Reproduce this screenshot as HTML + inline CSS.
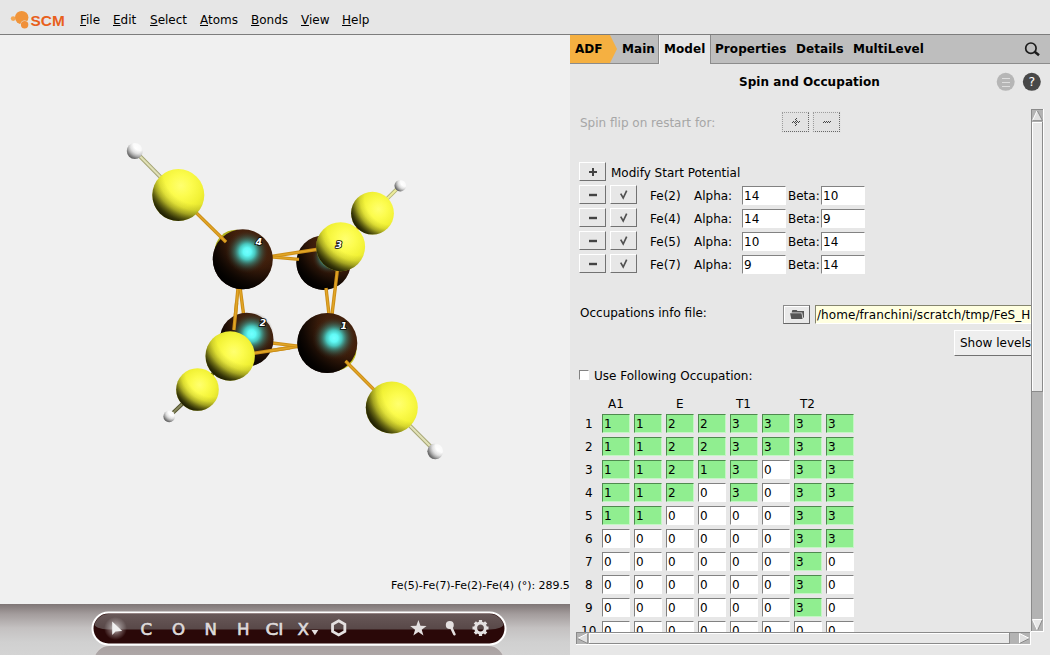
<!DOCTYPE html>
<html>
<head>
<meta charset="utf-8">
<title>ADF Spin and Occupation</title>
<style>
*{box-sizing:border-box;margin:0;padding:0}
html,body{width:1050px;height:655px;overflow:hidden;background:#f0f0f0}
body{font-family:"DejaVu Sans","Liberation Sans",sans-serif;font-size:12px;color:#000;position:relative}
.abs{position:absolute}
#menubar{left:0;top:0;width:1050px;height:34px;background:#e6e6e6}
#menuline{left:0;top:34px;width:1050px;height:1px;background:#7d7d7d}
.mi{position:absolute;top:12px;font-size:12px;line-height:16px;white-space:nowrap}
.mi u{text-decoration:underline;text-underline-offset:1px}
#left{left:0;top:35px;width:570px;height:569px;background:#f0f0f0}
#right{left:570px;top:35px;width:480px;height:620px;background:#e7e7e7}
#tabbar{left:570px;top:35px;width:480px;height:28px;background:#bebebe}
#tabline{left:570px;top:63px;width:480px;height:1px;background:#8c8c8c}
.tab{position:absolute;letter-spacing:0.06px;top:41px;font-weight:bold;font-size:12px;line-height:16px;white-space:nowrap}
#bottom{left:0;top:604px;width:570px;height:51px;background:linear-gradient(#7f7676 0px,#a39c9c 10px,#c4c1c1 24px,#d0d0d0 38px,#d4d4d4 51px)}
.lbl{position:absolute;margin-top:1px;font-size:12px;line-height:16px;white-space:nowrap}
.btn{position:absolute;background:#e7e7e7;border:1px solid;border-color:#fff #727272 #727272 #fff;font-size:12px;line-height:16px;text-align:center}
.inp{position:absolute;background:#fff;border:1px solid;border-color:#828282 #fff #fff #828282;font-size:12px;line-height:16px;padding-left:1px;padding-top:1px;white-space:nowrap;overflow:hidden}
.cell{position:absolute;width:28px;height:19px;background:#fff;border:1px solid;border-color:#828282 #fff #fff #828282;font-size:12px;line-height:15px;padding:2px 0 0 1px}
.g{background:#90ee90;border-color:#4f8a4f #c4f6c4 #c4f6c4 #4f8a4f}
.dot{border:1px dotted;border-color:#9c9c9c #666 #666 #9c9c9c;background:#e2e2e2;box-shadow:0 0 0 1px #e4e4e4}
</style>
</head>
<body>
<div id="menubar" class="abs"></div>
<div id="menuline" class="abs"></div>
<svg class="abs" style="left:0px;top:0px" width="70" height="34" viewBox="0 0 70 34">
<circle cx="13.2" cy="18.6" r="2.4" fill="#f4a650"/>
<circle cx="21.7" cy="17.6" r="6.7" fill="#f0943a"/>
<circle cx="24.6" cy="24.8" r="4.3" fill="#e6e6e6"/>
<circle cx="24.6" cy="24.8" r="3.7" fill="#f0903a"/>
<text x="30.6" y="25.7" font-family="Liberation Sans, sans-serif" font-weight="bold" font-size="15.2" fill="#e8601c" textLength="34.2" lengthAdjust="spacingAndGlyphs">SCM</text>
</svg>
<div class="mi" style="left:80px"><u>F</u>ile</div>
<div class="mi" style="left:113px"><u>E</u>dit</div>
<div class="mi" style="left:150px"><u>S</u>elect</div>
<div class="mi" style="left:200px"><u>A</u>toms</div>
<div class="mi" style="left:251px"><u>B</u>onds</div>
<div class="mi" style="left:301px"><u>V</u>iew</div>
<div class="mi" style="left:342px"><u>H</u>elp</div>

<div id="left" class="abs"></div>
<div id="right" class="abs"></div>
<div id="tabbar" class="abs"></div>
<div id="tabline" class="abs"></div>
<svg class="abs" style="left:570px;top:35px" width="480" height="30" viewBox="0 0 480 30">
<polygon points="0,0 40,0 47,14 40,28 0,28" fill="#f5b041"/>
<rect x="88" y="0" width="1" height="28" fill="#8c8c8c"/>
<rect x="89" y="0" width="51" height="30" fill="#e7e7e7"/>
<rect x="89" y="0" width="1" height="29" fill="#f6f6f6"/>
<rect x="140" y="0" width="1" height="28" fill="#8c8c8c"/>
<g fill="none" stroke="#1c1c1c"><circle cx="460.9" cy="13.2" r="5.2" stroke-width="1.7"/><path d="M464.7 16.8 L469 20.3" stroke-width="2.5"/></g>
</svg>
<div class="tab" style="left:575px">ADF</div>
<div class="tab" style="left:622px">Main</div>
<div class="tab" style="left:664px">Model</div>
<div class="tab" style="left:715px">Properties</div>
<div class="tab" style="left:796px">Details</div>
<div class="tab" style="left:853px">MultiLevel</div>

<div class="lbl" style="left:739px;top:73px;font-weight:bold;letter-spacing:0.06px">Spin and Occupation</div>
<svg class="abs" style="left:994px;top:70px" width="50" height="24" viewBox="0 0 50 24">
<circle cx="11.700" cy="11.800" r="9" fill="#b6b6b6"/>
<g stroke="#dedede" stroke-width="1"><path d="M8 8.500h8M8 12.500h8M8 16.500h8"/></g>
<circle cx="37.800" cy="11.800" r="9" fill="#484848"/>
<text x="37.7" y="16.3" text-anchor="middle" font-family="DejaVu Sans, sans-serif" font-size="12.5" fill="#fff">?</text>
</svg>
<div class="lbl" style="left:580px;top:114px;color:#a6a6a6">Spin flip on restart for:</div>
<div class="abs dot" style="left:782px;top:112px;width:27px;height:20px"><svg width="25" height="18" viewBox="0 0 25 18" style="display:block" shape-rendering="crispEdges"><defs><pattern id="stip" width="2" height="2" patternUnits="userSpaceOnUse"><rect x="0" y="0" width="1" height="1" fill="#444"/><rect x="1" y="1" width="1" height="1" fill="#444"/></pattern></defs><rect x="9" y="8" width="8" height="2" fill="url(#stip)"/><rect x="12" y="5" width="2" height="8" fill="url(#stip)"/></svg></div>
<div class="abs dot" style="left:813px;top:112px;width:27px;height:20px"><svg width="25" height="18" viewBox="0 0 25 18" style="display:block" shape-rendering="crispEdges"><rect x="9" y="8" width="8" height="2" fill="url(#stip)"/></svg></div>
<div class="btn" style="left:579px;top:162px;width:27px;height:19px"><svg width="25" height="17" viewBox="0 0 25 17" style="display:block"><path d="M9 9h8M13 5v8" stroke="#444" stroke-width="2" fill="none"/></svg></div>
<div class="lbl" style="left:611px;top:164px">Modify Start Potential</div>
<div class="btn" style="left:579px;top:185px;width:27px;height:19px"><svg width="25" height="17" viewBox="0 0 25 17" style="display:block"><path d="M9 9h8" stroke="#444" stroke-width="2.4" fill="none"/></svg></div>
<div class="btn" style="left:610px;top:185px;width:27px;height:19px"><svg width="25" height="17" viewBox="0 0 25 17" style="display:block"><path d="M9.7 7.6L12.2 12L15.7 4.7" stroke="#505050" stroke-width="1.7" fill="none" stroke-linejoin="miter"/></svg></div>
<div class="lbl" style="left:650px;top:187px">Fe(2)</div>
<div class="lbl" style="left:694px;top:187px">Alpha:</div>
<div class="inp" style="left:742px;top:186px;width:44px;height:19px">14</div>
<div class="lbl" style="left:788px;top:187px">Beta:</div>
<div class="inp" style="left:821px;top:186px;width:44px;height:19px">10</div>
<div class="btn" style="left:579px;top:208px;width:27px;height:19px"><svg width="25" height="17" viewBox="0 0 25 17" style="display:block"><path d="M9 9h8" stroke="#444" stroke-width="2.4" fill="none"/></svg></div>
<div class="btn" style="left:610px;top:208px;width:27px;height:19px"><svg width="25" height="17" viewBox="0 0 25 17" style="display:block"><path d="M9.7 7.6L12.2 12L15.7 4.7" stroke="#505050" stroke-width="1.7" fill="none" stroke-linejoin="miter"/></svg></div>
<div class="lbl" style="left:650px;top:210px">Fe(4)</div>
<div class="lbl" style="left:694px;top:210px">Alpha:</div>
<div class="inp" style="left:742px;top:209px;width:44px;height:19px">14</div>
<div class="lbl" style="left:788px;top:210px">Beta:</div>
<div class="inp" style="left:821px;top:209px;width:44px;height:19px">9</div>
<div class="btn" style="left:579px;top:231px;width:27px;height:19px"><svg width="25" height="17" viewBox="0 0 25 17" style="display:block"><path d="M9 9h8" stroke="#444" stroke-width="2.4" fill="none"/></svg></div>
<div class="btn" style="left:610px;top:231px;width:27px;height:19px"><svg width="25" height="17" viewBox="0 0 25 17" style="display:block"><path d="M9.7 7.6L12.2 12L15.7 4.7" stroke="#505050" stroke-width="1.7" fill="none" stroke-linejoin="miter"/></svg></div>
<div class="lbl" style="left:650px;top:233px">Fe(5)</div>
<div class="lbl" style="left:694px;top:233px">Alpha:</div>
<div class="inp" style="left:742px;top:232px;width:44px;height:19px">10</div>
<div class="lbl" style="left:788px;top:233px">Beta:</div>
<div class="inp" style="left:821px;top:232px;width:44px;height:19px">14</div>
<div class="btn" style="left:579px;top:254px;width:27px;height:19px"><svg width="25" height="17" viewBox="0 0 25 17" style="display:block"><path d="M9 9h8" stroke="#444" stroke-width="2.4" fill="none"/></svg></div>
<div class="btn" style="left:610px;top:254px;width:27px;height:19px"><svg width="25" height="17" viewBox="0 0 25 17" style="display:block"><path d="M9.7 7.6L12.2 12L15.7 4.7" stroke="#505050" stroke-width="1.7" fill="none" stroke-linejoin="miter"/></svg></div>
<div class="lbl" style="left:650px;top:256px">Fe(7)</div>
<div class="lbl" style="left:694px;top:256px">Alpha:</div>
<div class="inp" style="left:742px;top:255px;width:44px;height:19px">9</div>
<div class="lbl" style="left:788px;top:256px">Beta:</div>
<div class="inp" style="left:821px;top:255px;width:44px;height:19px">14</div>
<div class="lbl" style="left:580px;top:304px">Occupations info file:</div>
<div class="abs" style="left:783px;top:305px;width:27px;height:19px;background:#e9e9e9;border:1px solid;border-color:#8c8c8c #666 #666 #8c8c8c;box-shadow:inset 1px 1px 0 #fff"><svg width="25" height="17" viewBox="0 0 25 17" style="display:block"><path d="M8.4 4.1h4.2l0.9 1h6.5v6.4l-0.9 0.3-0.9-5.2h-10.6z" fill="#555"/><path d="M6.1 7.2h11.4l1.1 5.7h-11.3z" fill="#555"/></svg></div>
<div class="inp" style="left:815px;top:305px;width:216px;height:19px;background:#ffffe0;border-right:none;padding-left:1px;border-color:#85856f #fff #fff #85856f;letter-spacing:0.07px">/home/franchini/scratch/tmp/FeS_H</div>
<div class="btn" style="left:954px;top:330px;width:77px;height:26px;background:#eeeeee;border-right:none;text-align:left;padding-left:5px;padding-top:1px;line-height:22px;overflow:hidden;white-space:nowrap">Show levels</div>
<div class="abs" style="left:579px;top:370px;width:10px;height:10px;background:#fff;border:1px solid;border-color:#828282 #fff #fff #828282"></div>
<div class="lbl" style="left:594px;top:367px">Use Following Occupation:</div>
<div class="lbl" style="left:608px;top:395px">A1</div>
<div class="lbl" style="left:676px;top:395px">E</div>
<div class="lbl" style="left:736px;top:395px">T1</div>
<div class="lbl" style="left:800px;top:395px">T2</div>
<div class="abs" style="left:577px;top:410px;width:454px;height:222px;overflow:hidden">
<div class="lbl" style="left:8px;top:5px">1</div>
<div class="cell g" style="left:25px;top:4px">1</div>
<div class="cell g" style="left:57px;top:4px">1</div>
<div class="cell g" style="left:89px;top:4px">2</div>
<div class="cell g" style="left:121px;top:4px">2</div>
<div class="cell g" style="left:153px;top:4px">3</div>
<div class="cell g" style="left:185px;top:4px">3</div>
<div class="cell g" style="left:217px;top:4px">3</div>
<div class="cell g" style="left:249px;top:4px">3</div>
<div class="lbl" style="left:8px;top:28px">2</div>
<div class="cell g" style="left:25px;top:27px">1</div>
<div class="cell g" style="left:57px;top:27px">1</div>
<div class="cell g" style="left:89px;top:27px">2</div>
<div class="cell g" style="left:121px;top:27px">2</div>
<div class="cell g" style="left:153px;top:27px">3</div>
<div class="cell g" style="left:185px;top:27px">3</div>
<div class="cell g" style="left:217px;top:27px">3</div>
<div class="cell g" style="left:249px;top:27px">3</div>
<div class="lbl" style="left:8px;top:51px">3</div>
<div class="cell g" style="left:25px;top:50px">1</div>
<div class="cell g" style="left:57px;top:50px">1</div>
<div class="cell g" style="left:89px;top:50px">2</div>
<div class="cell g" style="left:121px;top:50px">1</div>
<div class="cell g" style="left:153px;top:50px">3</div>
<div class="cell" style="left:185px;top:50px">0</div>
<div class="cell g" style="left:217px;top:50px">3</div>
<div class="cell g" style="left:249px;top:50px">3</div>
<div class="lbl" style="left:8px;top:74px">4</div>
<div class="cell g" style="left:25px;top:73px">1</div>
<div class="cell g" style="left:57px;top:73px">1</div>
<div class="cell g" style="left:89px;top:73px">2</div>
<div class="cell" style="left:121px;top:73px">0</div>
<div class="cell g" style="left:153px;top:73px">3</div>
<div class="cell" style="left:185px;top:73px">0</div>
<div class="cell g" style="left:217px;top:73px">3</div>
<div class="cell g" style="left:249px;top:73px">3</div>
<div class="lbl" style="left:8px;top:97px">5</div>
<div class="cell g" style="left:25px;top:96px">1</div>
<div class="cell g" style="left:57px;top:96px">1</div>
<div class="cell" style="left:89px;top:96px">0</div>
<div class="cell" style="left:121px;top:96px">0</div>
<div class="cell" style="left:153px;top:96px">0</div>
<div class="cell" style="left:185px;top:96px">0</div>
<div class="cell g" style="left:217px;top:96px">3</div>
<div class="cell g" style="left:249px;top:96px">3</div>
<div class="lbl" style="left:8px;top:120px">6</div>
<div class="cell" style="left:25px;top:119px">0</div>
<div class="cell" style="left:57px;top:119px">0</div>
<div class="cell" style="left:89px;top:119px">0</div>
<div class="cell" style="left:121px;top:119px">0</div>
<div class="cell" style="left:153px;top:119px">0</div>
<div class="cell" style="left:185px;top:119px">0</div>
<div class="cell g" style="left:217px;top:119px">3</div>
<div class="cell g" style="left:249px;top:119px">3</div>
<div class="lbl" style="left:8px;top:143px">7</div>
<div class="cell" style="left:25px;top:142px">0</div>
<div class="cell" style="left:57px;top:142px">0</div>
<div class="cell" style="left:89px;top:142px">0</div>
<div class="cell" style="left:121px;top:142px">0</div>
<div class="cell" style="left:153px;top:142px">0</div>
<div class="cell" style="left:185px;top:142px">0</div>
<div class="cell g" style="left:217px;top:142px">3</div>
<div class="cell" style="left:249px;top:142px">0</div>
<div class="lbl" style="left:8px;top:166px">8</div>
<div class="cell" style="left:25px;top:165px">0</div>
<div class="cell" style="left:57px;top:165px">0</div>
<div class="cell" style="left:89px;top:165px">0</div>
<div class="cell" style="left:121px;top:165px">0</div>
<div class="cell" style="left:153px;top:165px">0</div>
<div class="cell" style="left:185px;top:165px">0</div>
<div class="cell g" style="left:217px;top:165px">3</div>
<div class="cell" style="left:249px;top:165px">0</div>
<div class="lbl" style="left:8px;top:189px">9</div>
<div class="cell" style="left:25px;top:188px">0</div>
<div class="cell" style="left:57px;top:188px">0</div>
<div class="cell" style="left:89px;top:188px">0</div>
<div class="cell" style="left:121px;top:188px">0</div>
<div class="cell" style="left:153px;top:188px">0</div>
<div class="cell" style="left:185px;top:188px">0</div>
<div class="cell g" style="left:217px;top:188px">3</div>
<div class="cell" style="left:249px;top:188px">0</div>
<div class="lbl" style="left:4px;top:212px">10</div>
<div class="cell" style="left:25px;top:211px">0</div>
<div class="cell" style="left:57px;top:211px">0</div>
<div class="cell" style="left:89px;top:211px">0</div>
<div class="cell" style="left:121px;top:211px">0</div>
<div class="cell" style="left:153px;top:211px">0</div>
<div class="cell" style="left:185px;top:211px">0</div>
<div class="cell" style="left:217px;top:211px">0</div>
<div class="cell" style="left:249px;top:211px">0</div>
</div>
<svg class="abs" style="left:1031px;top:109px" width="13" height="523" viewBox="0 0 13 523">
<rect x="0" y="0" width="13" height="523" fill="#b3b3b3"/>
<rect x="0" y="0" width="1" height="523" fill="#8a8a8a"/><rect x="0" y="0" width="13" height="1" fill="#8a8a8a"/>
<rect x="12" y="0" width="1" height="523" fill="#fff"/><rect x="0" y="522" width="13" height="1" fill="#fff"/>
<polygon points="6.2,1.5 1.5,11.5 11.5,11.5" fill="#e0e0e0"/><path d="M6.2 1.5L1.5 11.5" stroke="#fff" stroke-width="1"/><path d="M1.5 11.7H11.5L6.2 1.5" stroke="#8a8a8a" stroke-width="1" fill="none"/>
<rect x="1" y="13" width="11" height="270" fill="#e7e7e7"/><rect x="1" y="13" width="1" height="270" fill="#fff"/><rect x="1" y="13" width="11" height="1" fill="#fff"/><rect x="11" y="13" width="1" height="270" fill="#8a8a8a"/><rect x="1" y="282" width="11" height="1" fill="#8a8a8a"/>
<polygon points="6.5,521.5 1.5,510.5 11.5,510.5" fill="#e7e7e7"/><path d="M11.5 510.5H1.5L6.5 521.5" stroke="#fff" stroke-width="1" fill="none"/><path d="M11.5 510.5L6.5 521.5" stroke="#8a8a8a" stroke-width="1"/>
</svg>
<svg class="abs" style="left:576px;top:632px" width="455" height="13" viewBox="0 0 455 13">
<rect x="0" y="0" width="455" height="13" fill="#b3b3b3"/>
<rect x="0" y="0" width="455" height="1" fill="#8a8a8a"/><rect x="0" y="0" width="1" height="13" fill="#8a8a8a"/>
<rect x="0" y="12" width="455" height="1" fill="#fff"/><rect x="454" y="0" width="1" height="13" fill="#fff"/>
<polygon points="1.500,6.500 11.500,1.500 11.500,11.500" fill="#e0e0e0"/><path d="M11.500 1.500L1.500 6.500" stroke="#fff" stroke-width="1"/><path d="M1.500 6.500L11.700 11.500V1.500" stroke="#8a8a8a" stroke-width="1" fill="none"/>
<rect x="13" y="1" width="421" height="11" fill="#e7e7e7"/><rect x="13" y="1" width="421" height="1" fill="#fff"/><rect x="13" y="1" width="1" height="11" fill="#fff"/><rect x="13" y="11" width="421" height="1" fill="#8a8a8a"/><rect x="433" y="1" width="1" height="11" fill="#8a8a8a"/>
<polygon points="453.500,6.500 443.500,1.500 443.500,11.500" fill="#e0e0e0"/><path d="M443.500 11.500V1.500L453.500 6.500" stroke="#fff" stroke-width="1" fill="none"/><path d="M453.500 6.500L443.500 11.500" stroke="#8a8a8a" stroke-width="1"/>
</svg>
<svg class="abs" style="left:0;top:35px" width="570" height="569" viewBox="0 35 570 569">
<defs>
<radialGradient id="gCy" cx="0.5" cy="0.5" r="0.5">
<stop offset="0" stop-color="#74ffff"/><stop offset="0.18" stop-color="#60faf6"/><stop offset="0.36" stop-color="#48d4cc" stop-opacity="0.92"/><stop offset="0.56" stop-color="#3a948a" stop-opacity="0.62"/><stop offset="0.78" stop-color="#34584c" stop-opacity="0.3"/><stop offset="1" stop-color="#3c1a0a" stop-opacity="0"/>
</radialGradient>
<radialGradient id="bHtr" cx="0.630" cy="0.390" r="0.670"><stop offset="0" stop-color="#ffffff"/><stop offset="0.5" stop-color="#fafafa"/><stop offset="0.8" stop-color="#e8e8e8"/><stop offset="1" stop-color="#d4d4d4"/></radialGradient>
<radialGradient id="sHtr" gradientUnits="userSpaceOnUse" cx="405.75" cy="181.37" r="13.05"><stop offset="0.4" stop-color="#202020" stop-opacity="0"/><stop offset="0.6" stop-color="#202020" stop-opacity="0.12"/><stop offset="0.75" stop-color="#202020" stop-opacity="0.32"/><stop offset="0.88" stop-color="#202020" stop-opacity="0.55"/><stop offset="1" stop-color="#202020" stop-opacity="0.7"/></radialGradient>
<radialGradient id="bFe3" cx="0.600" cy="0.390" r="0.649"><stop offset="0" stop-color="#4e2612"/><stop offset="0.6" stop-color="#42200c"/><stop offset="1" stop-color="#361808"/></radialGradient>
<radialGradient id="sFe3" gradientUnits="userSpaceOnUse" cx="343.18" cy="236.59" r="61.20"><stop offset="0.42" stop-color="#000" stop-opacity="0"/><stop offset="0.55" stop-color="#000" stop-opacity="0.15"/><stop offset="0.68" stop-color="#000" stop-opacity="0.45"/><stop offset="0.8" stop-color="#000" stop-opacity="0.75"/><stop offset="0.9" stop-color="#000" stop-opacity="0.93"/><stop offset="1" stop-color="#000" stop-opacity="1"/></radialGradient>
<radialGradient id="bStr" cx="0.640" cy="0.405" r="0.669"><stop offset="0" stop-color="#ffff70"/><stop offset="0.3" stop-color="#fcfc4e"/><stop offset="0.6" stop-color="#f2f236"/><stop offset="0.85" stop-color="#e0e02c"/><stop offset="1" stop-color="#cccc26"/></radialGradient>
<radialGradient id="sStr" gradientUnits="userSpaceOnUse" cx="392.60" cy="197.22" r="48.15"><stop offset="0.58" stop-color="#101000" stop-opacity="0"/><stop offset="0.68" stop-color="#101000" stop-opacity="0.1"/><stop offset="0.77" stop-color="#101000" stop-opacity="0.32"/><stop offset="0.84" stop-color="#101000" stop-opacity="0.6"/><stop offset="0.9" stop-color="#101000" stop-opacity="0.8"/><stop offset="0.95" stop-color="#101000" stop-opacity="0.9"/><stop offset="1" stop-color="#101000" stop-opacity="0.94"/></radialGradient>
<radialGradient id="bFe2" cx="0.593" cy="0.400" r="0.636"><stop offset="0" stop-color="#4e2612"/><stop offset="0.6" stop-color="#42200c"/><stop offset="1" stop-color="#361808"/></radialGradient>
<radialGradient id="sFe2" gradientUnits="userSpaceOnUse" cx="266.00" cy="313.77" r="60.30"><stop offset="0.42" stop-color="#000" stop-opacity="0"/><stop offset="0.55" stop-color="#000" stop-opacity="0.15"/><stop offset="0.68" stop-color="#000" stop-opacity="0.45"/><stop offset="0.8" stop-color="#000" stop-opacity="0.75"/><stop offset="0.9" stop-color="#000" stop-opacity="0.93"/><stop offset="1" stop-color="#000" stop-opacity="1"/></radialGradient>
<radialGradient id="bHbl" cx="0.575" cy="0.375" r="0.646"><stop offset="0" stop-color="#ffffff"/><stop offset="0.5" stop-color="#fafafa"/><stop offset="0.8" stop-color="#e8e8e8"/><stop offset="1" stop-color="#d4d4d4"/></radialGradient>
<radialGradient id="sHbl" gradientUnits="userSpaceOnUse" cx="173.38" cy="410.83" r="13.05"><stop offset="0.4" stop-color="#202020" stop-opacity="0"/><stop offset="0.6" stop-color="#202020" stop-opacity="0.12"/><stop offset="0.75" stop-color="#202020" stop-opacity="0.32"/><stop offset="0.88" stop-color="#202020" stop-opacity="0.55"/><stop offset="1" stop-color="#202020" stop-opacity="0.7"/></radialGradient>
<radialGradient id="bSbl" cx="0.545" cy="0.390" r="0.619"><stop offset="0" stop-color="#ffff70"/><stop offset="0.3" stop-color="#fcfc4e"/><stop offset="0.6" stop-color="#f2f236"/><stop offset="0.85" stop-color="#e0e02c"/><stop offset="1" stop-color="#cccc26"/></radialGradient>
<radialGradient id="sSbl" gradientUnits="userSpaceOnUse" cx="212.84" cy="369.05" r="47.93"><stop offset="0.58" stop-color="#101000" stop-opacity="0"/><stop offset="0.68" stop-color="#101000" stop-opacity="0.1"/><stop offset="0.77" stop-color="#101000" stop-opacity="0.32"/><stop offset="0.84" stop-color="#101000" stop-opacity="0.6"/><stop offset="0.9" stop-color="#101000" stop-opacity="0.8"/><stop offset="0.95" stop-color="#101000" stop-opacity="0.9"/><stop offset="1" stop-color="#101000" stop-opacity="0.94"/></radialGradient>
<radialGradient id="bSfl" cx="0.575" cy="0.415" r="0.613"><stop offset="0" stop-color="#ffff70"/><stop offset="0.3" stop-color="#fcfc4e"/><stop offset="0.6" stop-color="#f2f236"/><stop offset="0.85" stop-color="#e0e02c"/><stop offset="1" stop-color="#cccc26"/></radialGradient>
<radialGradient id="sSfl" gradientUnits="userSpaceOnUse" cx="247.98" cy="332.29" r="55.57"><stop offset="0.58" stop-color="#101000" stop-opacity="0"/><stop offset="0.68" stop-color="#101000" stop-opacity="0.1"/><stop offset="0.77" stop-color="#101000" stop-opacity="0.32"/><stop offset="0.84" stop-color="#101000" stop-opacity="0.6"/><stop offset="0.9" stop-color="#101000" stop-opacity="0.8"/><stop offset="0.95" stop-color="#101000" stop-opacity="0.9"/><stop offset="1" stop-color="#101000" stop-opacity="0.94"/></radialGradient>
<radialGradient id="bFe4" cx="0.574" cy="0.375" r="0.645"><stop offset="0" stop-color="#4e2612"/><stop offset="0.6" stop-color="#42200c"/><stop offset="1" stop-color="#361808"/></radialGradient>
<radialGradient id="sFe4" gradientUnits="userSpaceOnUse" cx="264.40" cy="230.40" r="67.50"><stop offset="0.42" stop-color="#000" stop-opacity="0"/><stop offset="0.55" stop-color="#000" stop-opacity="0.15"/><stop offset="0.68" stop-color="#000" stop-opacity="0.45"/><stop offset="0.8" stop-color="#000" stop-opacity="0.75"/><stop offset="0.9" stop-color="#000" stop-opacity="0.93"/><stop offset="1" stop-color="#000" stop-opacity="1"/></radialGradient>
<radialGradient id="bFe1" cx="0.614" cy="0.418" r="0.640"><stop offset="0" stop-color="#4e2612"/><stop offset="0.6" stop-color="#42200c"/><stop offset="1" stop-color="#361808"/></radialGradient>
<radialGradient id="sFe1" gradientUnits="userSpaceOnUse" cx="355.48" cy="320.60" r="67.50"><stop offset="0.42" stop-color="#000" stop-opacity="0"/><stop offset="0.55" stop-color="#000" stop-opacity="0.15"/><stop offset="0.68" stop-color="#000" stop-opacity="0.45"/><stop offset="0.8" stop-color="#000" stop-opacity="0.75"/><stop offset="0.9" stop-color="#000" stop-opacity="0.93"/><stop offset="1" stop-color="#000" stop-opacity="1"/></radialGradient>
<radialGradient id="bS3" cx="0.600" cy="0.350" r="0.680"><stop offset="0" stop-color="#ffff70"/><stop offset="0.3" stop-color="#fcfc4e"/><stop offset="0.6" stop-color="#f2f236"/><stop offset="0.85" stop-color="#e0e02c"/><stop offset="1" stop-color="#cccc26"/></radialGradient>
<radialGradient id="sS3" gradientUnits="userSpaceOnUse" cx="358.24" cy="223.18" r="55.12"><stop offset="0.58" stop-color="#101000" stop-opacity="0"/><stop offset="0.68" stop-color="#101000" stop-opacity="0.1"/><stop offset="0.77" stop-color="#101000" stop-opacity="0.32"/><stop offset="0.84" stop-color="#101000" stop-opacity="0.6"/><stop offset="0.9" stop-color="#101000" stop-opacity="0.8"/><stop offset="0.95" stop-color="#101000" stop-opacity="0.9"/><stop offset="1" stop-color="#101000" stop-opacity="0.94"/></radialGradient>
<radialGradient id="bHtl" cx="0.550" cy="0.350" r="0.658"><stop offset="0" stop-color="#ffffff"/><stop offset="0.5" stop-color="#fafafa"/><stop offset="0.8" stop-color="#e8e8e8"/><stop offset="1" stop-color="#d4d4d4"/></radialGradient>
<radialGradient id="sHtl" gradientUnits="userSpaceOnUse" cx="140.56" cy="143.32" r="18.00"><stop offset="0.4" stop-color="#202020" stop-opacity="0"/><stop offset="0.6" stop-color="#202020" stop-opacity="0.12"/><stop offset="0.75" stop-color="#202020" stop-opacity="0.32"/><stop offset="0.88" stop-color="#202020" stop-opacity="0.55"/><stop offset="1" stop-color="#202020" stop-opacity="0.7"/></radialGradient>
<radialGradient id="bStl" cx="0.550" cy="0.320" r="0.687"><stop offset="0" stop-color="#ffff70"/><stop offset="0.3" stop-color="#fcfc4e"/><stop offset="0.6" stop-color="#f2f236"/><stop offset="0.85" stop-color="#e0e02c"/><stop offset="1" stop-color="#cccc26"/></radialGradient>
<radialGradient id="sStl" gradientUnits="userSpaceOnUse" cx="197.02" cy="170.14" r="58.50"><stop offset="0.58" stop-color="#101000" stop-opacity="0"/><stop offset="0.68" stop-color="#101000" stop-opacity="0.1"/><stop offset="0.77" stop-color="#101000" stop-opacity="0.32"/><stop offset="0.84" stop-color="#101000" stop-opacity="0.6"/><stop offset="0.9" stop-color="#101000" stop-opacity="0.8"/><stop offset="0.95" stop-color="#101000" stop-opacity="0.9"/><stop offset="1" stop-color="#101000" stop-opacity="0.94"/></radialGradient>
<radialGradient id="bHbr" cx="0.630" cy="0.430" r="0.648"><stop offset="0" stop-color="#ffffff"/><stop offset="0.5" stop-color="#fafafa"/><stop offset="0.8" stop-color="#e8e8e8"/><stop offset="1" stop-color="#d4d4d4"/></radialGradient>
<radialGradient id="sHbr" gradientUnits="userSpaceOnUse" cx="442.72" cy="445.40" r="17.78"><stop offset="0.4" stop-color="#202020" stop-opacity="0"/><stop offset="0.6" stop-color="#202020" stop-opacity="0.12"/><stop offset="0.75" stop-color="#202020" stop-opacity="0.32"/><stop offset="0.88" stop-color="#202020" stop-opacity="0.55"/><stop offset="1" stop-color="#202020" stop-opacity="0.7"/></radialGradient>
<radialGradient id="bSbr" cx="0.630" cy="0.430" r="0.648"><stop offset="0" stop-color="#ffff70"/><stop offset="0.3" stop-color="#fcfc4e"/><stop offset="0.6" stop-color="#f2f236"/><stop offset="0.85" stop-color="#e0e02c"/><stop offset="1" stop-color="#cccc26"/></radialGradient>
<radialGradient id="sSbr" gradientUnits="userSpaceOnUse" cx="416.22" cy="388.19" r="58.50"><stop offset="0.58" stop-color="#101000" stop-opacity="0"/><stop offset="0.68" stop-color="#101000" stop-opacity="0.1"/><stop offset="0.77" stop-color="#101000" stop-opacity="0.32"/><stop offset="0.84" stop-color="#101000" stop-opacity="0.6"/><stop offset="0.9" stop-color="#101000" stop-opacity="0.8"/><stop offset="0.95" stop-color="#101000" stop-opacity="0.9"/><stop offset="1" stop-color="#101000" stop-opacity="0.94"/></radialGradient>
</defs>
<g>
<circle cx="236.2" cy="251.3" r="21.6" fill="#b0b01c"/>
<circle cx="334.7" cy="349.2" r="21.8" fill="#c0c01c"/>
<path d="M400.3 185.7L372.5 213.2" stroke="#b4b478" stroke-width="3.8" fill="none"/><path d="M400.3 185.7L372.5 213.2" stroke="#ecec9c" stroke-width="1.9" fill="none"/>
<circle cx="400.3" cy="185.7" r="5.8" fill="url(#bHtr)"/><circle cx="400.3" cy="185.7" r="5.8" fill="url(#sHtr)"/>
<circle cx="323.6" cy="262.7" r="27.2" fill="url(#bFe3)"/><circle cx="323.6" cy="262.7" r="27.2" fill="url(#sFe3)"/>
<circle cx="329" cy="257" r="17" fill="url(#gCy)"/>
<path d="M372.5 213.2L330 256" stroke="#cc8e18" stroke-width="3.4" fill="none"/><path d="M372.5 213.2L330 256" stroke="#e2a626" stroke-width="1.4" fill="none"/>
<circle cx="372.5" cy="213.2" r="21.4" fill="url(#bStr)"/><circle cx="372.5" cy="213.2" r="21.4" fill="url(#sStr)"/>
<path d="M268 257L318 249.3" stroke="#cc8e18" stroke-width="3.4" fill="none"/><path d="M268 257L318 249.3" stroke="#e2a626" stroke-width="1.4" fill="none"/>
<path d="M268 256.6L299 259.4" stroke="#cc8e18" stroke-width="3.4" fill="none"/><path d="M268 256.6L299 259.4" stroke="#e2a626" stroke-width="1.4" fill="none"/>
<path d="M337.6 268L331.6 318" stroke="#cc8e18" stroke-width="3.4" fill="none"/><path d="M337.6 268L331.6 318" stroke="#e2a626" stroke-width="1.4" fill="none"/>
<path d="M326 288L329.4 318" stroke="#cc8e18" stroke-width="3.4" fill="none"/><path d="M326 288L329.4 318" stroke="#e2a626" stroke-width="1.4" fill="none"/>
<path d="M238.4 284L233.6 334" stroke="#cc8e18" stroke-width="3.4" fill="none"/><path d="M238.4 284L233.6 334" stroke="#e2a626" stroke-width="1.4" fill="none"/>
<path d="M239.6 284L243.8 316" stroke="#cc8e18" stroke-width="3.4" fill="none"/><path d="M239.6 284L243.8 316" stroke="#e2a626" stroke-width="1.4" fill="none"/>
<path d="M252 353.6L302 345.8" stroke="#cc8e18" stroke-width="3.4" fill="none"/><path d="M252 353.6L302 345.8" stroke="#e2a626" stroke-width="1.4" fill="none"/>
<path d="M268 342.5L302 346.6" stroke="#cc8e18" stroke-width="3.4" fill="none"/><path d="M268 342.5L302 346.6" stroke="#e2a626" stroke-width="1.4" fill="none"/>
<circle cx="246.7" cy="339.5" r="26.8" fill="url(#bFe2)"/><circle cx="246.7" cy="339.5" r="26.8" fill="url(#sFe2)"/>
<circle cx="251.7" cy="334" r="22" fill="url(#gCy)"/>
<path d="M233.9 330L236.6 303" stroke="#cc8e18" stroke-width="3.4" fill="none"/><path d="M233.9 330L236.6 303" stroke="#e2a626" stroke-width="1.4" fill="none"/>
<path d="M252 353.6L290 347.7" stroke="#cc8e18" stroke-width="3.4" fill="none"/><path d="M252 353.6L290 347.7" stroke="#e2a626" stroke-width="1.4" fill="none"/>
<path d="M169.2 416.4L197.5 389.5" stroke="#54542e" stroke-width="3.8" fill="none"/><path d="M169.2 416.4L197.5 389.5" stroke="#8a8a60" stroke-width="1.8" fill="none"/>
<circle cx="169.2" cy="416.4" r="5.8" fill="url(#bHbl)"/><circle cx="169.2" cy="416.4" r="5.8" fill="url(#sHbl)"/>
<path d="M197.5 389.5L230 356" stroke="#4a4a14" stroke-width="3.4" fill="none"/><path d="M197.5 389.5L230 356" stroke="#6a6a20" stroke-width="1.4" fill="none"/>
<circle cx="197.5" cy="389.5" r="21.3" fill="url(#bSbl)"/><circle cx="197.5" cy="389.5" r="21.3" fill="url(#sSbl)"/>
<circle cx="230.2" cy="356" r="24.7" fill="url(#bSfl)"/><circle cx="230.2" cy="356" r="24.7" fill="url(#sSfl)"/>
<circle cx="242.8" cy="259.2" r="30" fill="url(#bFe4)"/><circle cx="242.8" cy="259.2" r="30" fill="url(#sFe4)"/>
<circle cx="247.2" cy="251.7" r="22" fill="url(#gCy)"/>
<circle cx="327.3" cy="343" r="30" fill="url(#bFe1)"/><circle cx="327.3" cy="343" r="30" fill="url(#sFe1)"/>
<circle cx="334.1" cy="338.1" r="22" fill="url(#gCy)"/>
<circle cx="340.6" cy="246.7" r="24.5" fill="url(#bS3)"/><circle cx="340.6" cy="246.7" r="24.5" fill="url(#sS3)"/>
<path d="M134.8 151L178.3 195.1" stroke="#a4a474" stroke-width="4.1" fill="none"/><path d="M134.8 151L178.3 195.1" stroke="#e0e0b6" stroke-width="2.1" fill="none"/>
<circle cx="134.8" cy="151" r="8" fill="url(#bHtl)"/><circle cx="134.8" cy="151" r="8" fill="url(#sHtl)"/>
<path d="M178.3 195.1L226 242" stroke="#cc8e18" stroke-width="3.4" fill="none"/><path d="M178.3 195.1L226 242" stroke="#e2a626" stroke-width="1.4" fill="none"/>
<circle cx="178.3" cy="195.1" r="26" fill="url(#bStl)"/><circle cx="178.3" cy="195.1" r="26" fill="url(#sStl)"/>
<path d="M391.8 407.6L435.3 451.3" stroke="#a6a676" stroke-width="4.1" fill="none"/><path d="M391.8 407.6L435.3 451.3" stroke="#e2e2b8" stroke-width="2.1" fill="none"/>
<circle cx="435.3" cy="451.3" r="7.9" fill="url(#bHbr)"/><circle cx="435.3" cy="451.3" r="7.9" fill="url(#sHbr)"/>
<path d="M345.5 361L391.8 407.6" stroke="#cc8e18" stroke-width="3.4" fill="none"/><path d="M345.5 361L391.8 407.6" stroke="#e2a626" stroke-width="1.4" fill="none"/>
<circle cx="391.8" cy="407.6" r="26" fill="url(#bSbr)"/><circle cx="391.8" cy="407.6" r="26" fill="url(#sSbr)"/>
</g>
<g font-family="DejaVu Sans, Liberation Sans, sans-serif" font-style="italic" font-weight="bold" font-size="9.5" fill="#fff" stroke="#000" stroke-width="1.6" paint-order="stroke" text-anchor="middle">
<text x="258.8" y="245.2">4</text><text x="338.9" y="248.2">3</text><text x="262.7" y="325.8">2</text><text x="343.8" y="329">1</text>
</g>
</svg>
<div class="abs" style="left:391px;top:579px;font-size:11px;line-height:14px;white-space:nowrap;letter-spacing:-0.05px" id="status">Fe(5)-Fe(7)-Fe(2)-Fe(4) (°): 289.5</div>

<div id="bottom" class="abs"></div>
<svg class="abs" style="left:0;top:604px" width="570" height="51" viewBox="0 604 570 51">
<defs>
<linearGradient id="refl" x1="0" y1="0" x2="0" y2="1"><stop offset="0" stop-color="#a8a0a0"/><stop offset="1" stop-color="#bcb8b8"/></linearGradient>
<linearGradient id="gloss" x1="0" y1="0" x2="0" y2="1"><stop offset="0" stop-color="#6a5a5a"/><stop offset="1" stop-color="#584848"/></linearGradient>
<clipPath id="pillclip"><rect x="94" y="614" width="410" height="29" rx="14.5"/></clipPath>
<radialGradient id="glow" cx="0.5" cy="0.5" r="0.5"><stop offset="0" stop-color="#fff" stop-opacity="0.75"/><stop offset="0.5" stop-color="#fff" stop-opacity="0.3"/><stop offset="1" stop-color="#fff" stop-opacity="0"/></radialGradient>
</defs>
<rect x="93.500" y="645.200" width="411" height="32" rx="16" fill="url(#refl)" stroke="#d6d4d4" stroke-width="1.4"/>
<rect x="92.5" y="612.5" width="413" height="32" rx="16" fill="#2a0808" stroke="#fff" stroke-width="2"/>
<g clip-path="url(#pillclip)"><path d="M94 612H504V623.500A14 6 0 0 1 490 629.500H108A14 6 0 0 1 94 623.500Z" fill="url(#gloss)"/></g>
<circle cx="115.5" cy="628.5" r="11.5" fill="url(#glow)"/>
<path d="M112.2 621.5L112.2 635L115.5 631.5L122.2 630.9z" fill="#f0f0f0"/>
<g font-family="DejaVu Sans, Liberation Sans, sans-serif" font-size="16.6" fill="#dedada" stroke="#dedada" stroke-width="0.65">
<text x="140.5" y="634.6">C</text><text x="172" y="634.6">O</text><text x="204.5" y="634.6">N</text><text x="237" y="634.6">H</text><text x="265.5" y="634.6" textLength="18" lengthAdjust="spacingAndGlyphs">Cl</text><text x="297.5" y="634.6">X</text>
</g>
<path d="M311.500 630h6.800l-3.400 5.300z" fill="#e4e0e0"/>
<path d="M338.70 620.80L344.85 624.35L344.85 631.45L338.70 635.00L332.55 631.45L332.55 624.35z" fill="none" stroke="#e4e0e0" stroke-width="2.8" stroke-linejoin="miter"/>
<path d="M418.40 620.00L420.46 625.77L426.58 625.94L421.73 629.68L423.45 635.56L418.40 632.10L413.35 635.56L415.07 629.68L410.22 625.94L416.34 625.77z" fill="#e4e0e0"/>
<circle cx="449.800" cy="625" r="4" fill="#e4e0e0"/><path d="M451 627L454.400 634.200" stroke="#e4e0e0" stroke-width="2.6" stroke-linecap="round"/>
<g transform="translate(480.500 628)"><circle r="4.900" fill="none" stroke="#e4e0e0" stroke-width="3"/><g stroke="#e4e0e0" stroke-width="3.200"><path d="M0 -8V-5M0 8V5M-8 0H-5M8 0H5M-5.650 -5.650L-3.600 -3.600M5.650 5.650L3.600 3.600M-5.650 5.650L-3.600 3.600M5.650 -5.650L3.600 -3.600"/></g></g>
</svg>

</body>
</html>
